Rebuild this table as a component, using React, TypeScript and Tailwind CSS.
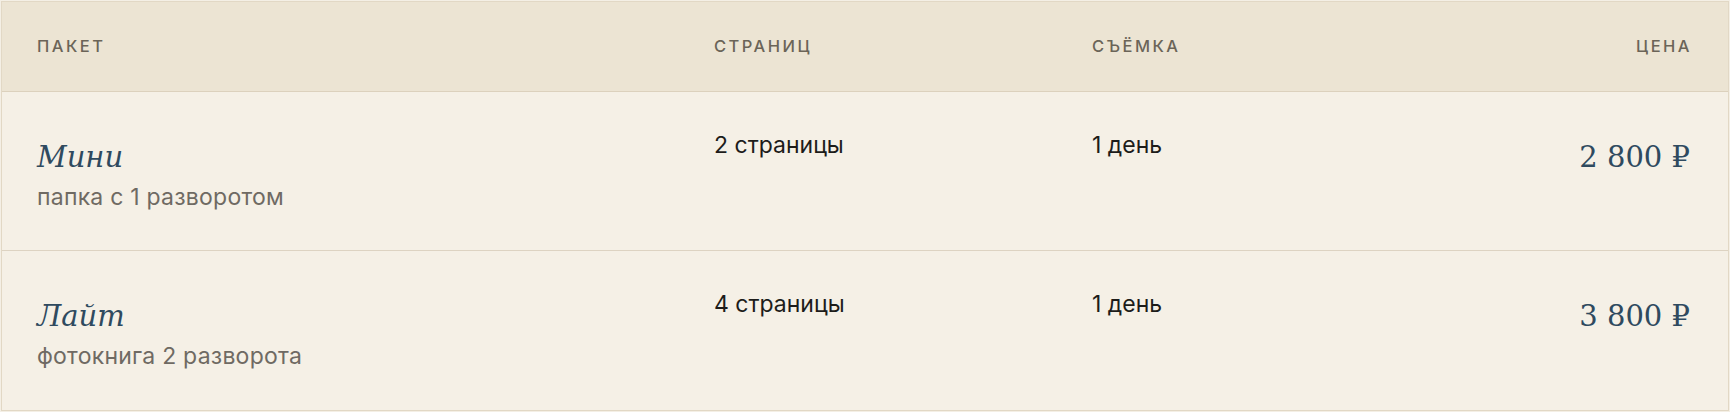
import React from "react";

type Pkg = {
  name: string;
  note: string;
  pages: string;
  shoot: string;
  price: string;
};

const packages: Pkg[] = [
  { name: "Мини", note: "папка с 1 разворотом", pages: "2 страницы", shoot: "1 день", price: "2 800 ₽" },
  { name: "Лайт", note: "фотокнига 2 разворота", pages: "4 страницы", shoot: "1 день", price: "3 800 ₽" },
];

const sans = { fontFamily: "Inter, 'Noto Sans', sans-serif" };
const serif = { fontFamily: "'DejaVu Serif', 'Liberation Serif', serif" };

export default function App() {
  return (
    <div className="min-h-screen bg-[#f4efe5] pt-px px-px" style={sans}>
      <div className="border border-[#e2d8c5] bg-[#f5f0e6]">
        {/* header */}
        <div className="grid h-[90px] grid-cols-[677px_378px_1fr_auto] items-center border-b border-[#dcd1bd] bg-[#ece4d3] text-[16.5px] font-medium uppercase tracking-[0.15em] text-[#6b6458]">
          <div className="pl-[35px]">Пакет</div>
          <div className="pl-[35px]">Страниц</div>
          <div className="pl-[35px]">Съёмка</div>
          <div className="pr-[36px] text-right">Цена</div>
        </div>

        {packages.map((p, i) => (
          <div
            key={p.name}
            className={`grid h-[159px] grid-cols-[677px_378px_1fr_auto] items-start pt-[36px] ${
              i < packages.length - 1 ? "border-b border-[#ddd3c2]" : ""
            }`}
          >
            <div className="pl-[35px]">
              <div className="mt-[12px] text-[29px] italic leading-[34px] text-[#2f4a5f]" style={serif}>
                {p.name}
              </div>
              <div className="mt-[6px] text-[23px] tracking-[0.01em] leading-[34px] text-[#6f6a63]">{p.note}</div>
            </div>
            <div className="pl-[35px] text-[23px] leading-[34px] text-[#1d1c1a]">{p.pages}</div>
            <div className="pl-[35px] text-[23px] leading-[34px] text-[#1d1c1a]">{p.shoot}</div>
            <div
              className="mt-[12px] pr-[38px] text-right text-[29px] leading-[34px] text-[#2f4a5f]"
              style={serif}
            >
              {p.price}
            </div>
          </div>
        ))}
      </div>
    </div>
  );
}
